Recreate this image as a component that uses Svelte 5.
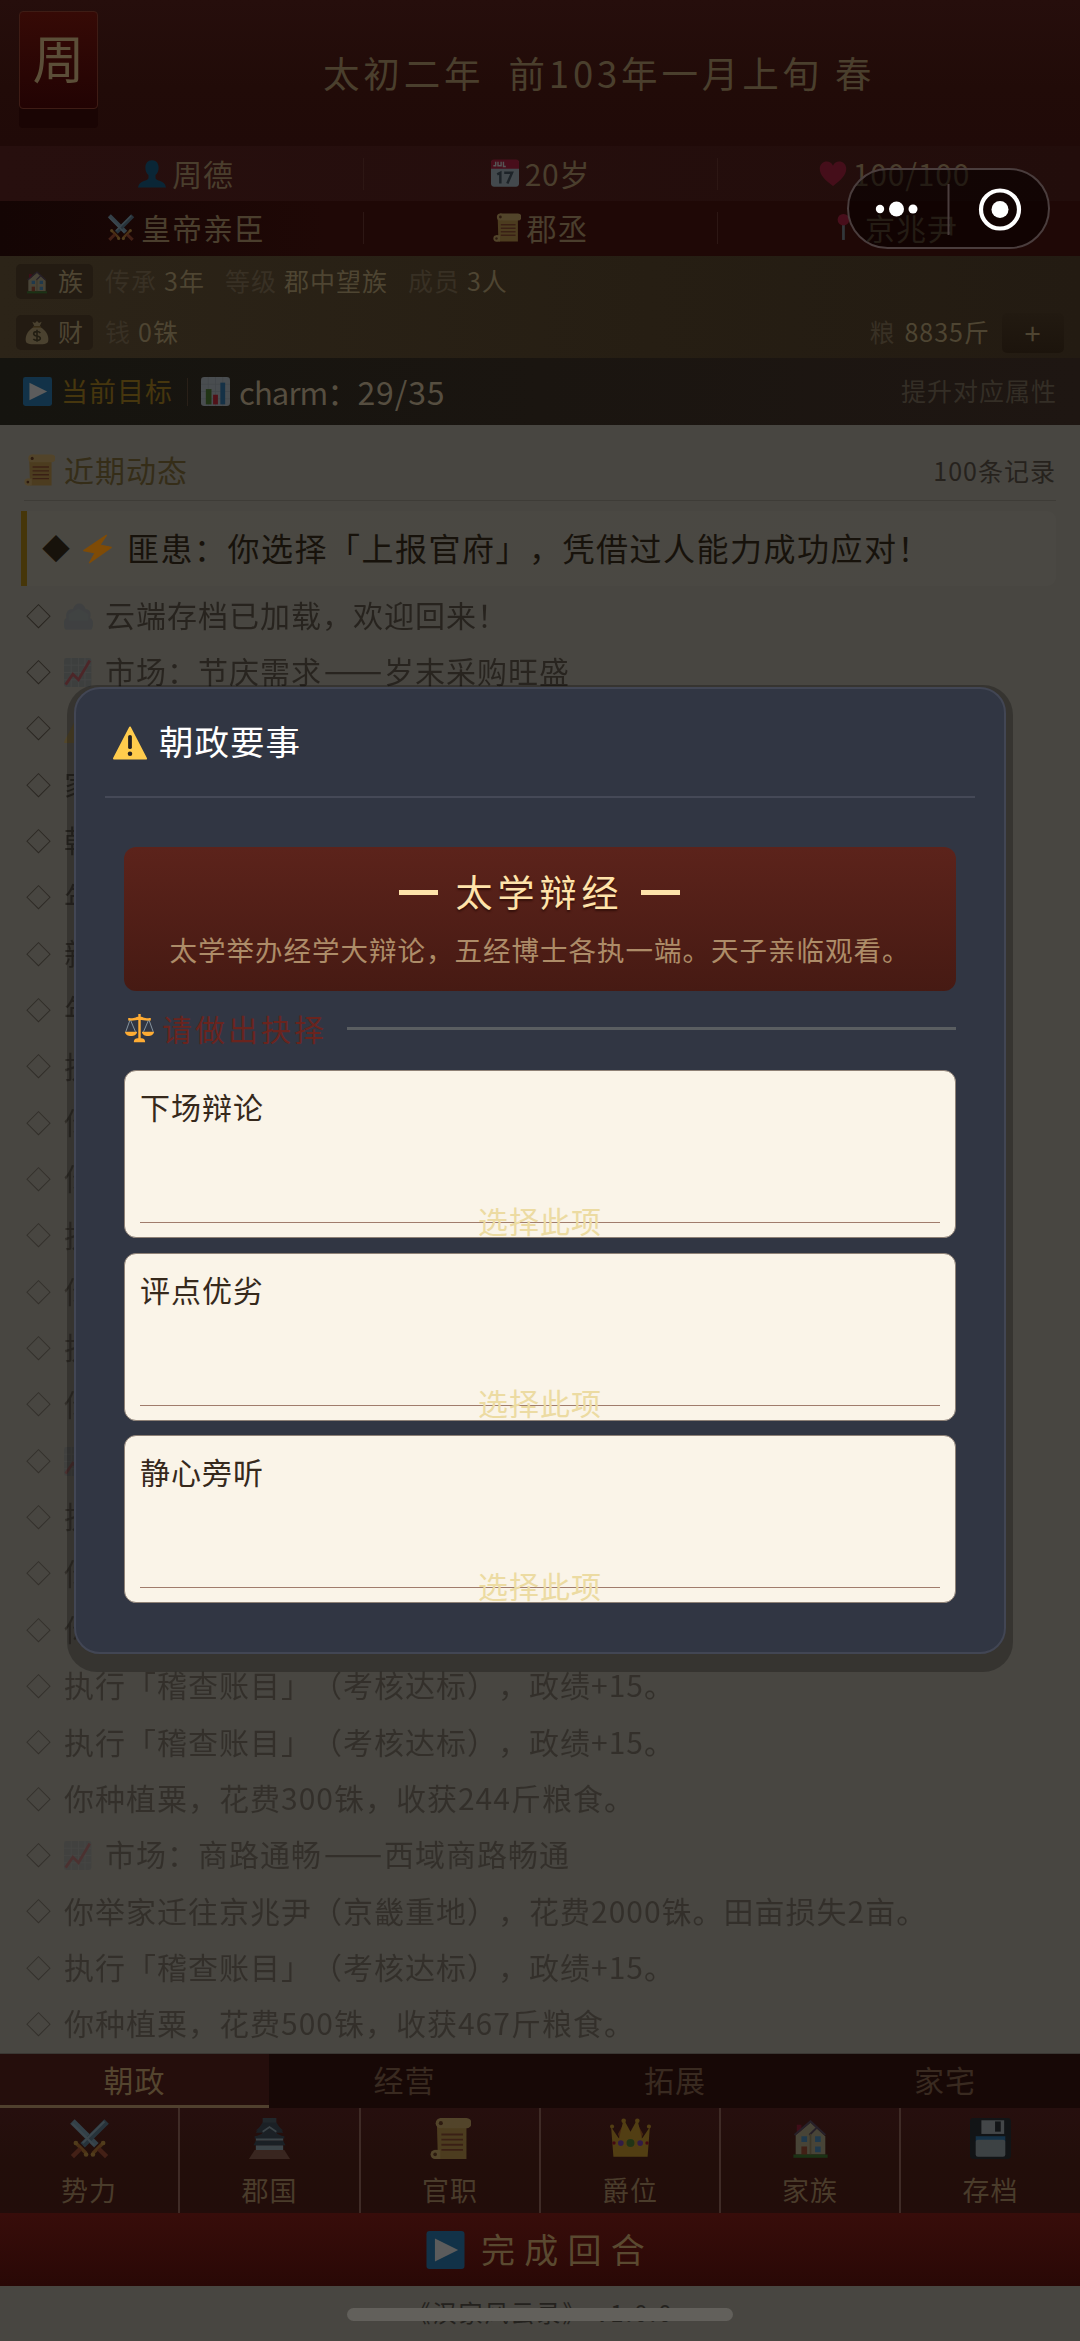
<script>
	const stats = [
		[
			{ icon: 'person', text: '周德' },
			{ icon: 'calendar', text: '20岁' },
			{ icon: 'heart', text: '100/100' }
		],
		[
			{ icon: 'swords', text: '皇帝亲臣' },
			{ icon: 'scroll', text: '郡丞' },
			{ icon: 'pin', text: '京兆尹' }
		]
	];

	const family = [
		{ label: '传承', value: '3年' },
		{ label: '等级', value: '郡中望族' },
		{ label: '成员', value: '3人' }
	];

	const logs = [
		{ icon: 'cloud', text: '云端存档已加载，欢迎回来！' },
		{ icon: 'trend', text: '市场：节庆需求——岁末采购旺盛' },
		{ icon: 'warning', text: '' },
		{ text: '家' },
		{ text: '朝' },
		{ text: '年' },
		{ text: '新' },
		{ text: '年' },
		{ text: '执' },
		{ text: '你' },
		{ text: '你' },
		{ text: '执' },
		{ text: '你' },
		{ text: '执' },
		{ text: '你' },
		{ icon: 'trend', text: '' },
		{ text: '执' },
		{ text: '你' },
		{ text: '你' },
		{ text: '执行「稽查账目」（考核达标），政绩+15。' },
		{ text: '执行「稽查账目」（考核达标），政绩+15。' },
		{ text: '你种植粟，花费300铢，收获244斤粮食。' },
		{ icon: 'trend', text: '市场：商路通畅——西域商路畅通' },
		{ text: '你举家迁往京兆尹（京畿重地），花费2000铢。田亩损失2亩。' },
		{ text: '执行「稽查账目」（考核达标），政绩+15。' },
		{ text: '你种植粟，花费500铢，收获467斤粮食。' }
	];

	const tabs = ['朝政', '经营', '拓展', '家宅'];
	let activeTab = $state('朝政');

	const menu = [
		{ icon: 'swords', text: '势力' },
		{ icon: 'castle', text: '郡国' },
		{ icon: 'scroll', text: '官职' },
		{ icon: 'crown', text: '爵位' },
		{ icon: 'house', text: '家族' },
		{ icon: 'disk', text: '存档' }
	];

	const choices = ['下场辩论', '评点优劣', '静心旁听'];

	// older records are fainter, down to a minimum
	const fade = (i) => Math.max(0.55, 0.86 - i * 0.03)
</script>

{#snippet icon(name)}
	<svg class="icon" viewBox="0 0 36 36">
		{#if name === 'person'}
			<path fill="#1c6a96" d="M18 1c5.500 0 8.500 4 8.500 9.500 0 4-1.500 7.500-4 9.500v4c1 2 3 2.500 6 3.500 4 1.500 6.500 3.500 7.500 8.500H0c1-5 3.500-7 7.500-8.500 3-1 5-1.500 6-3.500v-4c-2.500-2-4-5.500-4-9.500C9.500 5 12.500 1 18 1z" />
		{:else if name === 'calendar'}
			<rect y="1" width="36" height="34" rx="4" fill="#b9cbd6" />
			<path fill="#c8284c" d="M4 0h28a4 4 0 0 1 4 4v8H0V4a4 4 0 0 1 4-4z" />
			<path stroke="#eee" stroke-width="1.800" fill="none" d="M6 3v5H3M9 3v5h4V3M16 3v6h3" />
			<path stroke="#50616e" stroke-width="3.200" fill="none" d="M8 19l4-2v14M17 17h10l-6 14" />
		{:else if name === 'heart'}
			<path fill="#c02848" d="M18 34C8 27 1 20 1 12 1 2 14-1 18 8 22-1 35 2 35 12c0 8-7 15-17 22z" />
		{:else if name === 'swords'}
			<g stroke-linecap="butt">
				<path stroke="#8fb3c8" stroke-width="5.500" d="M3 3l21 21" />
				<path stroke="#6d8fa5" stroke-width="5.500" d="M33 3L12 24" />
				<path stroke="#a3c2d3" stroke-width="1.800" d="M3 5l19 19M31 3L12 22" />
				<path stroke="#d0853a" stroke-width="3" d="M6 22l9 9M21 31l9-9" />
				<path stroke="#b9583c" stroke-width="4" d="M10 27l-7 7M26 27l7 7" />
				<circle cx="6" cy="22" r="2" fill="#e0a84c" /><circle cx="30" cy="22" r="2" fill="#e0a84c" />
				<circle cx="15" cy="32" r="2" fill="#e0a84c" /><circle cx="21" cy="32" r="2" fill="#e0a84c" />
			</g>
		{:else if name === 'scroll'}
			<path fill="#d3a656" d="M6 4h26v32H7z" />
			<path fill="#e4be74" d="M9 0h23a4 4 0 0 1 0 9H12z" />
			<circle cx="9.500" cy="4.500" r="4.500" fill="#e4be74" /><circle cx="9.500" cy="4.500" r="1.800" fill="#7d4a2c" />
			<path fill="#e4be74" d="M4 28h5v8H4z" />
			<circle cx="4.500" cy="32" r="4" fill="#e4be74" /><circle cx="4.500" cy="32" r="1.600" fill="#7d4a2c" />
			<path stroke="#a25a3a" stroke-width="1.700" d="M10 14.500h19M10 19h19M10 23.500h19M10 28h19" />
		{:else if name === 'pin'}
			<path stroke="#8a9aa4" stroke-width="3.500" d="M16 14v20" />
			<circle cx="16" cy="8" r="7.500" fill="#c8284c" />
		{:else if name === 'house'}
			<path fill="#c8bc98" d="M5 15L18 4l13 12v16H5z" />
			<path fill="#b02444" d="M6 6h4v5l-4 3z" />
			<path stroke="#6b5870" stroke-width="1.800" fill="none" d="M4 15L18 3l13 12M17 15l7-7" />
			<path stroke="#a99970" stroke-width="1.500" d="M18 14v18" />
			<path fill="#5a9fd4" d="M10 16h5v5h-5zM22 16h5v5h-5zM22 25h5v5h-5z" />
			<path fill="#b45a3c" d="M10 25h5v8h-5z" />
			<path fill="#4b8b3b" d="M3 32h30v3H3z" />
		{:else if name === 'bag'}
			<path fill="#cdb582" d="M13 9C4 15 1 21 1 28c0 6 4 7 17 7s17-1 17-7c0-7-3-13-12-19z" />
			<path fill="#cdb582" d="M11 1l4 2 3-3 3 3 4-2-3 7h-8z" />
			<path stroke="#a8843f" stroke-width="2" d="M12 9h12" />
			<path stroke="#5f5233" stroke-width="2.400" fill="none" d="M23 18c-2-3-10-3-10 1 0 5 10 2 10 7 0 4-8 4-10.500 1M18 13v18" />
		{:else if name === 'play'}
			<rect width="36" height="36" rx="3" fill="#318cc7" />
			<path fill="#fff" d="M8 7l22 11L8 29z" />
		{:else if name === 'bars'}
			<rect width="36" height="36" rx="4" fill="#ccd6dd" />
			<path stroke="#b5c2cb" d="M0 9h36M0 18h36M0 27h36M9 0v36M18 0v36M27 0v36" />
			<path fill="#5c913b" d="M6 15h7v19H6z" /><path fill="#dd2e44" d="M15 22h6v12h-6z" /><path fill="#3b88c3" d="M24 7h6v27h-6z" />
		{:else if name === 'cloud'}
			<path fill="#9dadb6" d="M2 34C0 33 0 29 0 26c0-3 1-5 3-6-1-4 0-8 3-10 2-1 4-1 5-1 2-5 5-7 8-7s6 2 8 7c3 0 6 2 6 6 0 2 0 4-1 5 3 1 4 3 4 7 0 3-1 6-2 7z" />
			<path fill="#aab6bc" d="M6 15l12-7 12 7v8H6z" />
		{:else if name === 'trend'}
			<rect width="34" height="36" rx="3" fill="#9aa5ac" />
			<path stroke="#b9c2c8" d="M0 9h34M0 18h34M0 27h34M9 0v36M18 0v36M26 0v36" />
			<path stroke="#dd2e44" stroke-width="3.500" fill="none" d="M2 33l9-13 7 7L32 3" />
		{:else if name === 'warning'}
			<path fill="#ffcc4d" stroke="#ffcc4d" stroke-width="2" stroke-linejoin="round" d="M18 2l17 33H1z" />
			<path stroke="#231f20" stroke-width="4" stroke-linecap="round" d="M18 12v11" />
			<circle cx="18" cy="30" r="2.400" fill="#231f20" />
		{:else if name === 'bolt'}
			<path fill="#f4900c" stroke="#f4900c" stroke-width="1.500" stroke-linejoin="round" d="M29 1L1 20l14 3-7 12 27-19-14-3z" />
		{:else if name === 'scales'}
			<g fill="#ffac33">
				<path d="M16.500 0h3v31h-3zM4 5c8 1 10-2 14-2s6 3 14 2v3c-6 1-10-1-14-1S10 9 4 8z" />
				<path d="M0 22h15c0 7-15 7-15 0zM21 22h15c0 7-15 7-15 0zM11 35c0-5 3-5 7-5s7 0 7 5z" />
			</g>
			<path stroke="#99aab5" fill="none" d="M6 8L1 22M7 8l6 14M29 8l-6 14M30 8l5 14" />
		{:else if name === 'castle'}
			<path fill="#5b6b77" d="M12 0h12v6H12z" /><path fill="#a7bcc8" d="M12 6h12v8H12zM6 17h24v3H6zM6 24h24v4H6z" />
			<path fill="#4a5a68" d="M12 4h12l6 9H6zM5 16c7-1 9-5 13-7 4 2 6 6 13 7v2H5z" />
			<path fill="#4a5a68" d="M6 20h24l2 4H4zM6 11l6-5h12l6 5z" />
			<path stroke="#a7bcc8" stroke-width="1.500" fill="none" d="M12 12l6-4 6 4" />
			<path fill="#9d6a58" d="M5 28h26l5 8H0z" />
		{:else if name === 'crown'}
			<path fill="#c9702a" d="M7 14l5-9 6 9 6-9 5 9-3 8H10z" />
			<path fill="#e3ad34" d="M3 34L1 8l6 9 1 1 4-17 6 11 6-11 4 17 1-1 6-9-2 26z" />
			<circle cx="12" cy="2.500" r="2" fill="#e3ad34" /><circle cx="24" cy="2.500" r="2" fill="#e3ad34" />
			<circle cx="1.800" cy="7.500" r="1.800" fill="#e3ad34" /><circle cx="34.200" cy="7.500" r="1.800" fill="#e3ad34" />
			<circle cx="9.500" cy="22" r="2.500" fill="#8a4fc0" /><circle cx="26.500" cy="22" r="2.500" fill="#8a4fc0" />
			<circle cx="18" cy="22" r="3.500" fill="#5c913b" /><circle cx="3.500" cy="22" r="1.500" fill="#be1931" /><circle cx="32.500" cy="22" r="1.500" fill="#be1931" />
		{:else if name === 'disk'}
			<rect width="36" height="36" rx="3" fill="#31373d" />
			<path fill="#b9c2c8" d="M10 2h20v12H10z" /><path fill="#31373d" d="M22 3h5v9h-5z" />
			<path fill="#3b88c3" d="M5 16h26v5H5z" /><rect x="5" y="19" width="26" height="15" rx="2" fill="#a9b6be" />
		{/if}
	</svg>
{/snippet}

<div class="page">
	<header>
		<div class="seal"><span>周</span></div>
		<h1>太初二年&nbsp; 前103年一月上旬 春</h1>
	</header>

	{#each stats as row, i}
		<div class="stats" class:dark={i === 1}>
			{#each row as item}
				<div class="stat">{@render icon(item.icon)}<span>{item.text}</span></div>
			{/each}
		</div>
	{/each}

	<div class="assets">
		<div class="asset-row">
			<div class="badge">{@render icon('house')}<span>族</span></div>
			{#each family as item}
				<div class="pair"><em>{item.label}</em><b>{item.value}</b></div>
			{/each}
		</div>
		<div class="asset-row">
			<div class="badge">{@render icon('bag')}<span>财</span></div>
			<div class="pair"><em>钱</em><b>0铢</b></div>
			<div class="pair grain"><em>粮</em><b>8835斤</b></div>
			<button class="plus">+</button>
		</div>
	</div>

	<div class="goal">
		{@render icon('play')}
		<span class="goal-label">当前目标</span>
		<i></i>
		{@render icon('bars')}
		<span class="goal-text"><span class="attr">charm：</span>29/35</span>
		<span class="goal-hint">提升对应属性</span>
	</div>

	<main>
		<div class="log-head">
			{@render icon('scroll')}
			<h2>近期动态</h2>
			<span>100条记录</span>
		</div>
		<div class="latest">
			<span class="mark">◆</span>
			{@render icon('bolt')}
			<p>匪患：你选择「上报官府」，凭借过人能力成功应对！</p>
		</div>
		<ul>
			{#each logs as log, i}
				<li style="opacity: {fade(i)}">
					<span class="mark">◇</span>
					{#if log.icon}{@render icon(log.icon)}{/if}
					<p>{#each log.text.split('——') as part, n}{#if n > 0}<span class="dash">——</span>{/if}{part}{/each}</p>
				</li>
			{/each}
		</ul>
	</main>

	<nav>
		{#each tabs as tab}
			<button class:active={tab === activeTab} onclick={() => (activeTab = tab)}>{tab}</button>
		{/each}
	</nav>
	<div class="menu">
		{#each menu as item}
			<button>{@render icon(item.icon)}<span>{item.text}</span></button>
		{/each}
	</div>
	<button class="finish">{@render icon('play')}<span>完成回合</span></button>
	<footer>《汉家风云录》 v1.0.0</footer>

	<div class="home-bar"></div>

	<div class="capsule">
		<svg width="199" height="76" viewBox="0 0 199 76">
			<g fill="#fff">
				<circle cx="31" cy="38" r="4.200" /><circle cx="47.500" cy="38" r="7.500" /><circle cx="64" cy="38" r="4.500" />
				<circle cx="151" cy="38.500" r="8.500" />
			</g>
			<path d="M99.500 13v51" stroke="#4a3d3d" stroke-width="2" />
			<circle cx="151" cy="38.500" r="19" fill="none" stroke="#fff" stroke-width="4.200" />
		</svg>
	</div>

	<div class="dialog-shadow">
		<div class="dialog">
			<div class="dialog-title">{@render icon('warning')}<span>朝政要事</span></div>
			<div class="banner">
				<h3><i></i><span>太学辩经</span><i></i></h3>
				<p>太学举办经学大辩论，五经博士各执一端。天子亲临观看。</p>
			</div>
			<div class="prompt">{@render icon('scales')}<span>请做出抉择</span><i></i></div>
			<div class="choices">
				{#each choices as choice}
					<div class="choice">
						<p>{choice}</p>
						<div class="pick"><button>选择此项</button></div>
					</div>
				{/each}
			</div>
		</div>
	</div>
</div>

<style>
	:global(body) {
		margin: 0;
		background: #484641;
	}

	.page {
		position: relative;
		width: 1080px;
		height: 2341px;
		overflow: hidden;
		display: flex;
		flex-direction: column;
		background: #484641;
		font-family: "Noto Sans CJK SC", sans-serif;
		line-height: 1;
		letter-spacing: 1px;
		text-spacing-trim: space-all;
		white-space: nowrap;
	}

	.page * {
		box-sizing: border-box;
	}

	h1, h2, h3, p, ul {
		margin: 0;
		padding: 0;
		font-weight: 400;
	}

	span, p, h1, h2, em, b {
		position: relative;
		top: -1px;
	}

	em, b {
		font-style: normal;
		font-weight: 400;
	}

	button {
		border: 0;
		padding: 0;
		background: none;
		color: inherit;
		font: inherit;
		letter-spacing: inherit;
	}

	.icon {
		flex: none;
		width: 29px;
		height: 29px;
		filter: brightness(0.36);
	}

	header {
		height: 146px;
		display: flex;
		background: linear-gradient(#260e0c, #210b08 60%, #200a08);
		color: #4a3f2d;
	}

	.seal {
		width: 79px;
		height: 98px;
		margin: 11px 0 0 19px;
		padding-bottom: 4px;
		display: flex;
		align-items: center;
		justify-content: center;
		border: 1px solid #3e1c15;
		border-radius: 4px;
		background: linear-gradient(#360a06, #220303);
		box-shadow: 0 19px 0 #1a0504;
		color: #5b4e38;
		font-size: 52px;
		letter-spacing: 0;
	}

	h1 {
		margin: 56px 0 0 225px;
		font-size: 36.5px;
		letter-spacing: 3.85px;
	}

	.stats {
		height: 55px;
		padding: 0 9px;
		display: grid;
		grid-template-columns: repeat(3, 1fr);
		align-items: center;
		background: linear-gradient(90deg, #270f0e, #220d0b);
		color: #4a3e2d;
		font-size: 30px;
		letter-spacing: 0.8px;
	}

	.stats.dark {
		padding-bottom: 2px;
		background: linear-gradient(90deg, #140504, #1f0806 30%, #1f0806);
		letter-spacing: 1px;
	}

	.stat {
		height: 32px;
		display: flex;
		align-items: center;
		justify-content: center;
		gap: 6px;
	}

	.stat .icon {
		width: 28px;
	}

	.stat + .stat {
		border-left: 1px solid #2d1714;
	}

	.assets {
		height: 102px;
		background: linear-gradient(90deg, #2c2418, #261e13 60%, #231b12);
		color: #4e4532;
		font-size: 25px;
	}

	.asset-row {
		height: 51px;
		padding: 0 16px;
		display: flex;
		align-items: center;
		gap: 20px;
	}

	.badge {
		width: 77px;
		height: 35px;
		margin-right: -8px;
		display: flex;
		align-items: center;
		justify-content: center;
		gap: 9px;
		border-radius: 5px;
		background: #231b12;
	}

	.badge .icon {
		width: 24px;
		height: 26px;
	}

	.pair {
		display: flex;
		gap: 7px;
	}

	.pair em {
		color: #383024;
	}

	.grain {
		margin-left: auto;
		gap: 9px;
	}

	.plus {
		width: 62px;
		height: 40px;
		margin-left: -8px;
		border-radius: 5px;
		background: linear-gradient(#221a11, #1c140c);
		font-size: 29px;
	}

	.goal {
		height: 67px;
		padding: 0 23px;
		display: flex;
		align-items: center;
		background: linear-gradient(90deg, #15140f, #1a1510 50%, #1e1612);
		font-size: 27px;
	}

	.goal-label {
		margin-left: 9px;
		color: #46360e;
	}

	.goal i {
		width: 1px;
		height: 28px;
		margin: 0 13px 0 14px;
		background: #292018;
	}

	.goal-text {
		margin-left: 9px;
		color: #564e40;
		font-size: 32px;
		letter-spacing: 0.9px;
	}

	.attr {
		top: 0;
		font-size: 31px;
		letter-spacing: -0.9px;
	}

	.goal-hint {
		margin-left: auto;
		color: #342e26;
		font-size: 25px;
	}

	main {
		height: 1629px;
		padding: 0 24px;
		border-bottom: 1px solid #3a3733;
	}

	.log-head {
		height: 76px;
		padding-top: 14px;
		display: flex;
		align-items: center;
		border-bottom: 1px solid #3e3c37;
		color: #352d18;
	}

	.log-head h2 {
		margin-left: 9px;
		font-size: 30px;
	}

	.log-head span {
		top: 1px;
		margin-left: auto;
		color: #26221d;
		font-size: 25px;
	}

	.log-head .icon {
		width: 31px;
		height: 32px;
	}

	.latest {
		height: 75px;
		margin: 10px 0 2px -3px;
		padding-left: 15px;
		display: flex;
		align-items: center;
		border-left: 6px solid #463609;
		border-radius: 0 9px 9px 0;
		background: linear-gradient(90deg, #4a4842, #4a4843);
		color: #17120b;
		font-size: 32px;
		letter-spacing: 1.5px;
	}

	.latest .icon {
		height: 34px;
		margin: 0 15px 0 13px;
		filter: brightness(0.52);
	}

	.latest .mark {
		width: 28px;
		font-size: 28px;
	}

	main p {
		top: -2px;
	}

	ul {
		list-style: none;
	}

	li {
		height: 56.330px;
		display: flex;
		align-items: center;
		color: #221e19;
		font-size: 30px;
	}

	li .mark {
		width: 40px;
		padding-left: 2px;
		font-size: 25px;
	}

	li .icon {
		margin-right: 12px;
		opacity: 0.7;
	}

	/* two em dashes drawn as one unbroken rule, two characters wide */
	.dash {
		top: 0;
		display: inline-flex;
		justify-content: center;
		width: 62px;
		font-size: 35px;
		line-height: 0;
		letter-spacing: 0;
	}

	nav {
		height: 54px;
		display: grid;
		grid-template-columns: 269px 271px 270px 270px;
		background: #170806;
		color: #392a20;
		font-size: 30px;
	}

	nav button {
		padding-bottom: 2px;
		border-bottom: 3px solid transparent;
	}

	nav .active {
		border-bottom-color: #50402e;
		background: #250e0c;
		color: #54452f;
	}

	.menu {
		height: 105px;
		display: grid;
		grid-template-columns: 180px 181px 180px 180px 180px 1fr;
		background: linear-gradient(#260f0e, #220e0a 50%, #220d0a);
		color: #4a3c2b;
		font-size: 27px;
	}

	.menu button {
		padding-top: 10px;
		display: flex;
		flex-direction: column;
		align-items: center;
		gap: 18px;
	}

	.menu button:not(:last-child) {
		border-right: 2px solid #3f2b26;
	}

	.menu .icon {
		width: 41px;
		height: 41px;
	}

	.finish {
		height: 73px;
		display: flex;
		align-items: center;
		justify-content: center;
		gap: 16px;
		background: linear-gradient(#380d0a, #290806);
		color: #5a4930;
		font-size: 34px;
		letter-spacing: 9.300px;
	}

	.finish .icon {
		width: 39px;
		height: 38px;
	}

	footer {
		padding-top: 14px;
		text-align: center;
		color: #24221e;
		font-size: 24px;
		letter-spacing: 2px;
	}

	.home-bar {
		position: absolute;
		left: 347px;
		top: 2308px;
		width: 386px;
		height: 13px;
		border-radius: 7px;
		background: #62605b;
	}

	.capsule {
		position: absolute;
		left: 847px;
		top: 168px;
		width: 203px;
		height: 81px;
		display: flex;
		align-items: center;
		border: 2px solid #4a3d3d;
		border-radius: 41px;
		background: rgba(5, 0, 0, 0.55);
	}

	.dialog-shadow {
		position: absolute;
		left: 67px;
		top: 685px;
		width: 946px;
		height: 987px;
		padding: 2px 7px 18px;
		border-radius: 30px;
		background: rgba(0, 0, 0, 0.25);
	}

	.dialog {
		height: 967px;
		padding: 0 29px;
		border: 2px solid #424654;
		border-radius: 26px;
		background: #313643;
	}

	.dialog-title {
		height: 109px;
		padding: 0 8px;
		display: flex;
		align-items: center;
		gap: 12px;
		border-bottom: 2px solid #454957;
		color: #fff;
		font-size: 34.5px;
	}

	.dialog-title span {
		top: -2px;
	}

	.dialog-title .icon {
		width: 34px;
		height: 35px;
		filter: none;
	}

	.banner {
		height: 144px;
		margin: 49px 19px 0;
		padding-top: 27px;
		display: flex;
		flex-direction: column;
		align-items: center;
		gap: 26px;
		border-radius: 12px;
		background: linear-gradient(#5c231b, #461a13);
		color: #ad8c68;
		font-size: 27.500px;
	}

	.banner h3 {
		margin-left: -2px;
		display: flex;
		align-items: center;
		color: #ffe3aa;
		font-size: 37px;
		letter-spacing: 5px;
		text-shadow: 0 2px 2px #34100b;
	}

	.banner h3 span {
		margin: 0 17px 0 18px;
	}

	.banner i {
		width: 39px;
		height: 5px;
		background: #ffe3aa;
	}

	.prompt {
		height: 79px;
		margin: 0 19px;
		padding-bottom: 4px;
		display: flex;
		align-items: center;
		color: #6a241e;
		font-size: 30px;
		letter-spacing: 3px;
	}

	.prompt .icon {
		width: 31px;
		height: 29px;
		margin-right: 7px;
		filter: none;
	}

	.prompt i {
		flex: 1;
		height: 3px;
		margin-left: 20px;
		background: #5a5e61;
	}

	.choices {
		margin: 0 19px;
		display: grid;
		gap: 14.500px;
	}

	.choice {
		height: 168px;
		padding: 21px 15px 0;
		border: 1px solid #8e8176;
		border-radius: 12px;
		background: #faf4e8;
		color: #36291c;
		font-size: 30px;
	}

	.pick {
		height: 1px;
		margin-top: 100px;
		display: flex;
		align-items: center;
		justify-content: center;
		background: #a07c6c;
		color: #ecdba2;
	}

	.pick button {
		position: relative;
		top: -3px;
		line-height: 1;
	}
</style>
